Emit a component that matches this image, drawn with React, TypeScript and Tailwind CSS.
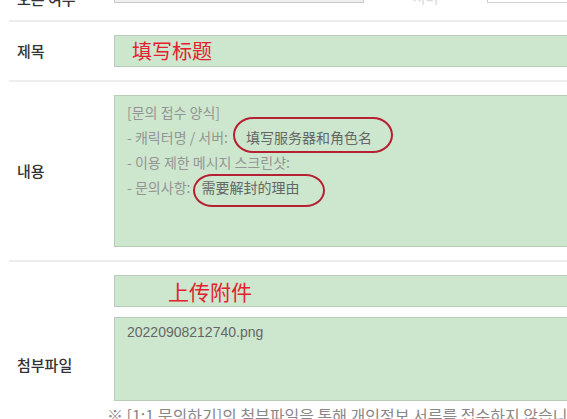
import React from "react";

const KR = { fontFamily: '"Noto Sans CJK KR", "Noto Sans CJK SC", sans-serif' };
const SC = { fontFamily: '"Noto Sans CJK SC", "Noto Sans CJK KR", sans-serif' };

function Label({ children }: { children: React.ReactNode }) {
  return (
    <div className="w-[105px] shrink-0 pl-[8px] text-[15px] font-medium text-[#333]" style={KR}>
      {children}
    </div>
  );
}

export default function App() {
  return (
    <div className="w-[567px] h-[419px] overflow-hidden bg-white" style={KR}>
      <div className="ml-[9px] w-[720px]">
        {/* partial top row */}
        <div className="mt-[-29px] h-[51px] flex items-start border-b-2 border-[#ededed]">
          <div className="w-[105px] shrink-0 pl-[8px] pt-[18px] text-[15px] leading-[20px] font-medium text-[#333]">
            오픈 여부
          </div>
          <div className="w-[250px] h-[32px] shrink-0 border border-[#c9c9c9] bg-[#efefef]" />
          <div className="w-[123px] shrink-0 pt-[16px] text-center text-[14px] leading-[20px] font-medium text-[#ddd]">
            서버
          </div>
          <div className="w-[200px] h-[32px] shrink-0 border border-[#cfcfcf] bg-white" />
        </div>

        {/* title row */}
        <div className="flex items-center py-[13px] border-b-2 border-[#ededed]">
          <Label>제목</Label>
          <div className="flex-1 h-[32px] border border-[#b8ccb8] bg-[#cce7cd] flex items-center pl-[17px]">
            <span className="text-[20px] leading-[24px] text-[#e4202e]" style={SC}>
              填写标题
            </span>
          </div>
        </div>

        {/* content row */}
        <div className="flex items-center py-[13px] border-b-2 border-[#ededed]">
          <Label>내용</Label>
          <div className="flex-1 h-[152px] border border-[#b8ccb8] bg-[#cce7cd] pl-[12px] pt-[4px] text-[14px] leading-[25px] text-[#959595]">
            <div>[문의 접수 양식]</div>
            <div>
              - 캐릭터명 / 서버:{" "}
              <span className="relative inline-block ml-[15px] text-[#666]" style={SC}>
                填写服务器和角色名
                <span className="absolute left-[-13px] right-[-21px] top-[-8px] bottom-[-3px] rounded-[20px/18px] border-[2.5px] border-[#b71f32]" />
              </span>
            </div>
            <div>- 이용 제한 메시지 스크린샷:</div>
            <div>
              - 문의사항:{" "}
              <span className="relative inline-block ml-[8px] text-[#666]" style={SC}>
                需要解封的理由
                <span className="absolute left-[-9px] right-[-25px] top-[-1px] bottom-[-7px] rounded-[20px/17px] border-[2.5px] border-[#b71f32]" />
              </span>
            </div>
          </div>
        </div>

        {/* attachment row */}
        <div className="flex items-center pt-[13px]">
          <Label>첨부파일</Label>
          <div className="flex-1 flex flex-col pb-[30px]">
            <div className="h-[32px] border border-[#b8ccb8] bg-[#cce7cd] flex items-center pl-[53px]">
              <span className="text-[21px] leading-[24px] text-[#e4202e]" style={SC}>
                上传附件
              </span>
            </div>
            <div className="mt-[10px] h-[84px] border border-[#b8ccb8] bg-[#cce7cd] pl-[12px] pt-[4px]">
              <div
                className="text-[14px] leading-[20px] text-[#666]"
                style={{ fontFamily: '"Liberation Sans", Arial, sans-serif' }}
              >
                20220908212740.png
              </div>
            </div>
            <div className="ml-[-7px] mt-[4px] text-[16px] leading-[20px] text-[#888] whitespace-nowrap">
              ※ [1:1 문의하기]의 첨부파일을 통해 개인정보 서류를 접수하지 않습니다.
            </div>
          </div>
        </div>
      </div>
    </div>
  );
}
